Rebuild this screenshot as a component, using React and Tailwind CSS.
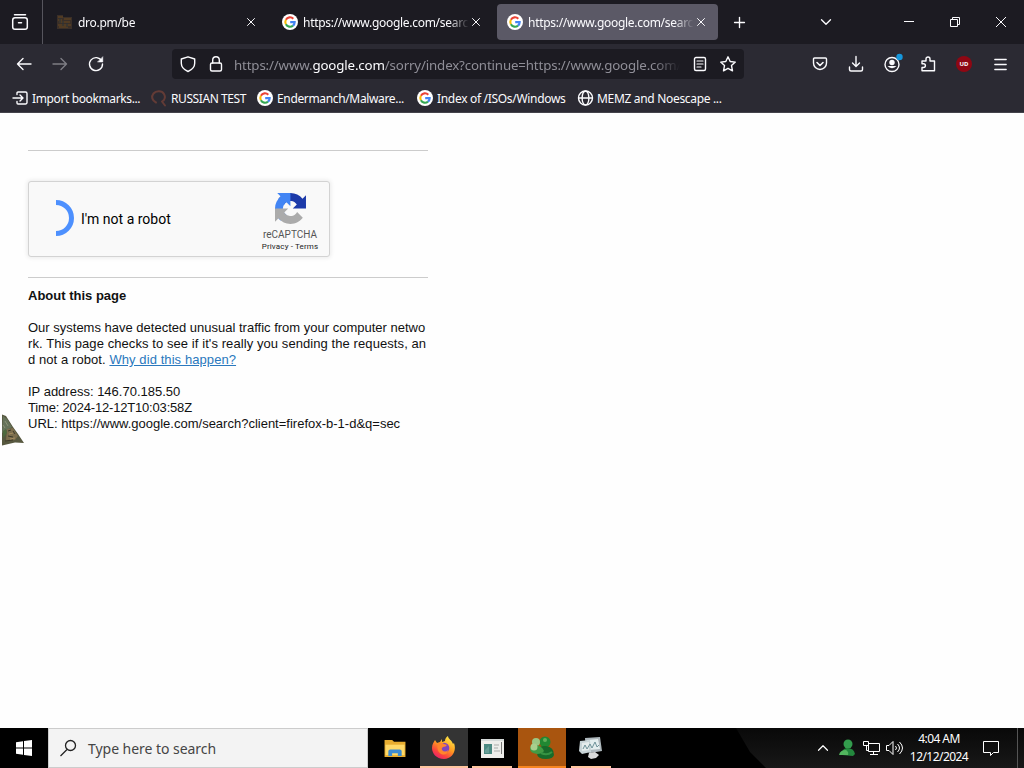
import { ChevronDown, ChevronUp, Menu, Plus, X } from "lucide-react";

const tabs = [
  { title: "dro.pm/be", icon: "be" },
  { title: "https://www.google.com/searc", icon: "google" },
  { title: "https://www.google.com/searc", icon: "google", active: true },
];

function Google() {
  return (
    <svg width="16" height="16" viewBox="0 0 16 16" className="shrink-0">
      <circle cx="8" cy="8" r="8" fill="#fff" />
      <g fill="none" strokeWidth="2.1">
        <path d="M11.3 4.7A4.7 4.7 0 0 0 3.9 5.7" stroke="#ea4335" />
        <path d="M3.9 5.7A4.7 4.7 0 0 0 3.9 10.3" stroke="#fbbc05" />
        <path d="M3.9 10.3A4.7 4.7 0 0 0 11 11.6" stroke="#34a853" />
        <path d="M11 11.6A4.7 4.7 0 0 0 12.7 8.1H8.2" stroke="#4285f4" />
      </g>
    </svg>
  );
}

function BeIcon() {
  return (
    <svg width="16" height="16" viewBox="0 0 16 16" className="shrink-0">
      <path d="M0 1h6v2h9v12H0z" fill="#3a2f28" />
      <path d="M1 3h5M1 6h4M2 8h11M7 5h7M1 11h13M2 13h9" stroke="#69491f" strokeWidth="1" />
      <path d="M3 4v5M6 7v5M10 9v4" stroke="#27323a" strokeWidth="1" />
    </svg>
  );
}

function Tab({ title, icon, active }) {
  return (
    <div
      className={`flex h-9 w-[221px] shrink-0 items-center rounded pl-2.5 pr-3 ${
        active ? "bg-[#5b5966]" : ""
      }`}
    >
      {icon === "google" ? <Google /> : <BeIcon />}
      <span className="ml-[5px] mt-0.5 w-[166px] whitespace-nowrap text-[12px] leading-5 tracking-[-0.29px] [mask-image:linear-gradient(to_right,black_88%,transparent)]">
        {title}
      </span>
      <X size={14} strokeWidth={1.7} className="ml-auto -mr-0.5 shrink-0" />
    </div>
  );
}

function TabBar() {
  return (
    <div className="flex h-11 items-center bg-[#1c1b22]">
      <div className="flex h-11 w-[43px] items-center justify-center border-r border-[#56555d] pr-0.5">
        <svg width="18" height="18" viewBox="0 0 18 18" fill="none" stroke="#fbfbfe" strokeWidth="1.5" strokeLinecap="round">
          <path d="M3.5 1.8h11" />
          <path d="M4 4.800h10q2.300 0 2.300 2.400v6.800q0 2.300-2.300 2.300H4q-2.300 0-2.300-2.300V7.200q0-2.400 2.300-2.400zM7.500 9.800h3" />
        </svg>
      </div>
      <div className="ml-1 flex gap-1">
        {tabs.map((tab, i) => (
          <Tab key={i} {...tab} />
        ))}
      </div>
      <Plus size={17} strokeWidth={1.9} className="ml-[13px]" />
      <ChevronDown size={18} strokeWidth={1.8} className="ml-[69px]" />
      <svg width="12" height="12" viewBox="0 0 12 12" className="ml-[68px]" fill="none" stroke="#fbfbfe">
        <path d="M1 5.5h10" />
      </svg>
      <svg width="12" height="12" viewBox="0 0 12 12" className="ml-[34px]" fill="none" stroke="#fbfbfe">
        <path d="M1.500 3.500h7v7h-7zM3.500 3.500v-2h7v7h-2" />
      </svg>
      <svg width="12" height="12" viewBox="0 0 12 12" className="ml-[34px]" fill="none" stroke="#fbfbfe">
        <path d="M1 1l10 10M11 1L1 11" />
      </svg>
    </div>
  );
}

function Icon({ children, className = "" }) {
  return (
    <svg
      width="16"
      height="16"
      viewBox="0 0 16 16"
      fill="none"
      stroke="#fbfbfe"
      strokeWidth="1.4"
      strokeLinecap="round"
      strokeLinejoin="round"
      className={`shrink-0 overflow-visible ${className}`}
    >
      {children}
    </svg>
  );
}

function NavBar() {
  return (
    <div className="flex h-10 items-center bg-[#2b2a33] pl-4">
      <Icon>
        <path d="M15 8H1.500M7 2.500L1.500 8L7 13.500" />
      </Icon>
      <Icon className="ml-5 opacity-40">
        <path d="M1 8h13.500M9 2.500L14.500 8L9 13.500" />
      </Icon>
      <Icon className="ml-5">
        <path d="M13.700 5A6.500 6.500 0 1 0 14.500 8" />
        <path d="M14.800 1v5H9.800z" fill="#fbfbfe" strokeWidth="0.500" />
      </Icon>
      <div className="ml-[68px] flex h-[30px] w-[572px] items-center rounded bg-[#1c1b22] pl-2">
        <Icon>
          <path d="M8 .8L14.700 3v4.300c0 3.600-3 6.600-6.700 8.200-3.700-1.600-6.700-4.600-6.700-8.200V3z" />
        </Icon>
        <Icon className="ml-3">
          <rect x="2.500" y="7" width="11" height="8" rx="1.500" />
          <path d="M4.700 7V4a3.300 3.300 0 0 1 6.600 0v3" />
        </Icon>
        <div className="ml-2.5 mt-0.5 w-[446px] whitespace-nowrap text-[13.3px] leading-5 tracking-[-0.15px] text-[#8f8e97] [mask-image:linear-gradient(to_right,black_94%,transparent)]">
          https://www.<span className="text-[#fbfbfe]">google.com</span>
          /sorry/index?continue=https://www.google.com/
        </div>
        <Icon className="ml-3">
          <rect x="2.500" y="1.500" width="11" height="13" rx="1.500" />
          <path d="M5 5h6M5 8h6M5 11h4" strokeWidth="1.200" />
        </Icon>
        <Icon className="ml-3">
          <path d="M8 .8l2.200 4.700 5.100.6-3.800 3.500 1 5.200L8 12.300l-4.500 2.500 1-5.200L.7 6.100l5.100-.6z" />
        </Icon>
      </div>
      <Icon className="ml-[68px]">
        <path d="M2.500 2h11a1 1 0 0 1 1 1v4a6.500 6.500 0 0 1-13 0V3a1 1 0 0 1 1-1z" />
        <path d="M5 6.500l3 3 3-3" strokeWidth="1.600" />
      </Icon>
      <Icon className="ml-5">
        <path d="M8 .5v9.500M4.500 7L8 10.500 11.500 7M1.500 11v2.500q0 1.500 1.500 1.500h10q1.500 0 1.500-1.500V11" />
      </Icon>
      <Icon className="ml-5">
        <circle cx="8" cy="8.500" r="7" />
        <circle cx="8" cy="6.500" r="2.700" fill="#fbfbfe" stroke="none" />
        <path d="M3.500 10h9a5.500 5 0 0 1-9 0z" fill="#fbfbfe" stroke="none" />
        <circle cx="15.500" cy="1" r="3.200" fill="#1597dc" stroke="none" />
      </Icon>
      <Icon className="ml-5">
        <path d="M2 5h4V3a2 2 0 0 1 4 0v2h4.500v9.700H2v-3.200h1.500a1.900 1.900 0 0 0 0-3.800H2z" />
      </Icon>
      <div className="ml-5 flex size-4 items-center justify-center rounded-full bg-[#8f0713] text-[6px] font-bold leading-none">
        UD
      </div>
      <Menu size={17} strokeWidth={1.900} className="ml-5" />
    </div>
  );
}

function Bookmark({ children, label, className = "" }) {
  return (
    <div className={`flex shrink-0 items-center whitespace-nowrap ${className}`}>
      {children}
      <span className="ml-1 mt-px text-[12px] leading-5">{label}</span>
    </div>
  );
}

function BookmarksBar() {
  return (
    <div className="flex h-[29px] items-center border-b border-[#44434b] bg-[#2b2a33] pl-3">
      <Bookmark label="Import bookmarks..." className="w-[139px] tracking-[-0.38px]">
        <Icon>
          <path d="M5 4.500V3a1 1 0 0 1 1-1h7.500a1.500 1.500 0 0 1 1.500 1.500v9a1.500 1.500 0 0 1-1.500 1.500H6a1 1 0 0 1-1-1v-1.500M1 8h9.500M8 5l3 3-3 3" />
        </Icon>
      </Bookmark>
      <Bookmark label="RUSSIAN TEST" className="w-[106px] tracking-[-0.42px]">
        <Icon>
          <path d="M5 12.500C1 10.500 0 6.500 2.500 3.500S11 .5 13 4s.5 6-2 7.500l3 4" stroke="#633b36" strokeWidth="2" />
        </Icon>
      </Bookmark>
      <Bookmark label="Endermanch/Malware..." className="w-40 tracking-[-0.35px]">
        <Google />
      </Bookmark>
      <Bookmark label="Index of /ISOs/Windows" className="w-40 tracking-[-0.31px]">
        <Google />
      </Bookmark>
      <Bookmark label="MEMZ and Noescape ..." className="tracking-[-0.32px]">
        <Icon>
          <circle cx="8.500" cy="8" r="7" />
          <ellipse cx="8.500" cy="8" rx="3.400" ry="7" />
          <path d="M2 8h13" />
        </Icon>
      </Bookmark>
    </div>
  );
}

function Captcha() {
  return (
    <div className="mt-[30px] flex h-[76px] w-[302px] rounded-[3px] border border-[#d3d3d3] bg-[#f9f9f9] shadow-[0_0_4px_1px_rgba(0,0,0,0.08)]">
      <svg width="20" height="38" viewBox="0 0 20 38" className="ml-[26px] mt-[17px]" fill="none">
        <path d="M1 3.500a15.500 15.500 0 0 1 0 31" stroke="#4d90fe" strokeWidth="5" />
      </svg>
      <div className="ml-1.5 mt-[27px] w-[150px] font-[Roboto,sans-serif] text-[14px] leading-5 text-black">
        I'm not a robot
      </div>
      <div className="ml-[25px] mt-[11px] flex w-[68px] flex-col items-center font-[Roboto,sans-serif] text-[#555]">
        <svg width="31" height="31" viewBox="0 0 64 64">
          <path d="M64 31.955l-.033-1.370V4.687l-7.160 7.160C50.950 4.674 42.033.093 32.050.093c-10.400 0-19.622 4.960-25.458 12.640l11.736 11.860a15.550 15.550 0 0 1 4.754-5.334c2.050-1.600 4.952-2.906 8.968-2.906.485 0 .860.057 1.135.163 4.976.393 9.288 3.140 11.828 7.124l-8.307 8.307L64 31.953" fill="#1c3aa9" />
          <path d="M31.862.094l-1.370.033H4.594l7.160 7.160C4.580 13.147 0 22.060 0 32.046c0 10.400 4.960 19.622 12.640 25.458L24.500 45.768a15.550 15.550 0 0 1-5.334-4.754c-1.600-2.050-2.906-4.952-2.906-8.968 0-.485.057-.860.163-1.135.393-4.976 3.140-9.288 7.124-11.828l8.307 8.307L31.860.095" fill="#4285f4" />
          <path d="M.001 32.045l.033 1.370v25.898l7.160-7.160c5.860 7.173 14.774 11.754 24.760 11.754 10.400 0 19.622-4.960 25.458-12.640l-11.736-11.860a15.550 15.550 0 0 1-4.754 5.334c-2.050 1.600-4.952 2.906-8.968 2.906-.485 0-.860-.057-1.135-.163-4.976-.393-9.288-3.140-11.828-7.124l8.307-8.307L.001 32.047" fill="#ababab" />
        </svg>
        <span className="mt-[5px] text-[10px] leading-3">reCAPTCHA</span>
        <span className="whitespace-nowrap text-[8px] leading-[11px] tracking-[0.150px] text-[#222]">Privacy - Terms</span>
      </div>
    </div>
  );
}

function Page() {
  return (
    <main className="grow overflow-hidden bg-[#fefefe] pl-7 pt-[37px] font-[Liberation_Sans,sans-serif] text-[13px] leading-4 text-[#111]">
      <hr className="w-[400px] border-[#ccc]" />
      <Captcha />
      <hr className="mt-5 w-[400px] border-[#ccc]" />
      <h1 className="mt-2.5 font-bold">About this page</h1>
      <p className="mt-4 whitespace-nowrap">
        Our systems have detected unusual traffic from your computer netwo
        <br />
        <span className="tracking-[0.080px]">
          rk. This page checks to see if it's really you sending the requests, an
          <br />
          d not a robot.{" "}
          <a href="#" className="text-[#2a78bd] underline">
            Why did this happen?
          </a>
        </span>
      </p>
      <p className="mt-4 whitespace-nowrap">
        IP address: 146.70.185.50
        <br />
        <span className="tracking-[-0.180px]">Time: 2024-12-12T10:03:58Z</span>
        <br />
        URL: https://www.google.com/search?client=firefox-b-1-d&amp;q=sec
      </p>
    </main>
  );
}

function Cursor() {
  return (
    <svg width="24" height="34" viewBox="0 0 24 34" className="absolute left-0 top-[413px]">
      <path d="M2 1.500L6 3l7 11 5 7 6 9-9-.5L2 32.500z" fill="#57583f" />
      <path d="M3 3l4 3 5 8-5 3-5 3z" fill="#66735a" />
      <path d="M7 16l6-1 5 8-3 4-9 1z" fill="#7c6e4d" />
      <path d="M3 18l3-2 1 4-4 5z" fill="#4d6a3e" />
      <path d="M8 18l3-1M13 18l2 3M8 23l5 1M5 28l8-1" stroke="#3c3928" />
      <path d="M5 8l3 5M3 12l2 3" stroke="#8b9277" />
      <path d="M9 21l4-1M10 26l5-1" stroke="#a58d60" />
    </svg>
  );
}

function TaskButton({ children, className = "", line = "" }) {
  return (
    <div className={`relative flex h-10 w-12 shrink-0 items-center justify-center ${className}`}>
      {children}
      <div className={`absolute bottom-0 h-0.5 ${line}`} />
    </div>
  );
}

function Taskbar() {
  return (
    <footer className="flex h-10 shrink-0 items-center bg-black text-white">
      <div className="flex w-12 justify-center">
        <svg width="16" height="16" viewBox="0 0 16 16" fill="#fff">
          <path d="M0 2.300L7 1.300v6.200H0zM8 1.100L16 0v7.500H8zM0 8.500h7v6.200l-7-1zM8 8.500h8V16l-8-1.100z" />
        </svg>
      </div>
      <div className="flex h-10 w-80 items-center border border-[#ccc] bg-[#f3f3f3] pl-2.5 text-[#454545]">
        <svg width="18" height="18" viewBox="0 0 18 18" fill="none" stroke="#222" strokeWidth="1.300">
          <circle cx="11.500" cy="6.500" r="5" />
          <path d="M8 10.500L1.500 17" />
        </svg>
        <span className="ml-[11px] mt-0.5 text-[14px] leading-5 tracking-[-0.040px]">Type here to search</span>
      </div>
      <div className="ml-[3px] flex">
        <TaskButton>
          <svg width="22" height="19" viewBox="0 0 22 20">
            <path d="M0 1h8l2 2h12v16H0z" fill="#e8ad30" />
            <path d="M1 6h20v11H1z" fill="#ffd968" />
            <path d="M4 18v-5q0-2 2-2h10q2 0 2 2v5h-4v-3H8v3z" fill="#3d8bd1" />
          </svg>
        </TaskButton>
        <TaskButton className="ml-px bg-[#343434]" line="inset-x-0 bg-[#ffc59f]">
          <svg width="24" height="24" viewBox="0 0 24 24">
            <defs>
              <linearGradient id="flame" x1="0.800" y1="0" x2="0.200" y2="1">
                <stop offset="0" stopColor="#fff04a" />
                <stop offset="0.450" stopColor="#ff9a20" />
                <stop offset="0.750" stopColor="#fa443e" />
                <stop offset="1" stopColor="#e51a74" />
              </linearGradient>
            </defs>
            <path d="M3 4l2 3 3-1 2-3v3l3-1c0-2 1-4 3-5 0 3 4 4 5 8l1-1c3 8-2 16-10 16C4 23 0 17 0 12c0-4 2-6 3-8z" fill="url(#flame)" />
            <circle cx="12" cy="12" r="5.300" fill="#8045bd" />
            <path d="M6 7q4-1 6 1l3 1q-1 2-4 2-2 1-1 3 3 3 6 0-1 6-7 4-5-3-3-11z" fill="#ff852c" />
          </svg>
        </TaskButton>
        <TaskButton line="inset-x-1 bg-[#ffc59f]">
          <svg width="23" height="19" viewBox="0 0 23 19">
            <path d="M0 0h23v19H0z" fill="#eeeeeb" />
            <path d="M0 0h23v2H0z" fill="#d5dad9" />
            <path d="M3 5h8v10H3z" fill="#4b8a82" />
            <path d="M13 6h5M13 9h4M13 12h6" stroke="#a8aba9" />
            <path d="M20.500 3v12" stroke="#777" />
            <path d="M4 11l4-4v7H4z" fill="#689f98" />
          </svg>
        </TaskButton>
        <TaskButton className="ml-0.5 bg-[#a9550f]" line="inset-x-0 bg-[#f6851f]">
          <svg width="26" height="26" viewBox="0 0 26 26">
            <circle cx="16" cy="7" r="5.500" fill="#218832" />
            <path d="M8 18q0-8 9-7 8 1 8 9-1 4-8 4-9 0-9-6z" fill="#176b2a" />
            <circle cx="7" cy="7" r="4" fill="#9bc783" />
            <path d="M1 14q0-4 6-4 6 1 8 6-2 3-7 3-7-1-7-5z" fill="#429b45" />
            <circle cx="5" cy="12" r="3.500" fill="#a8cf8d" />
            <path d="M12 18q6 3 11-1" stroke="#369343" fill="none" strokeWidth="2" />
            <circle cx="16" cy="5" r="2" fill="#62af5c" />
          </svg>
        </TaskButton>
        <TaskButton className="ml-px" line="inset-x-1 bg-[#ffc59f]">
          <svg width="24" height="24" viewBox="0 0 24 24">
            <path d="M6 2l15-1 2 14-12 2-4-2z" fill="#aeb8bd" />
            <path d="M8 4l11-1 2 10-11 1z" fill="#e4eeef" />
            <path d="M1 5l10-1 1 12-9 2-3-3z" fill="#c8d4d7" />
            <path d="M3 7l7-1v8l-7 1z" fill="#e5ecec" />
            <path d="M4 13l2-4 2 4 3-5 2 4 3-6 2 5 2-2" fill="none" stroke="#6e9299" />
            <path d="M10 17l6-1 4 3-3 3-5 1-3-2z" fill="#d8d9d9" />
          </svg>
        </TaskButton>
      </div>
      <div className="ml-auto flex h-10 w-[288px] items-center bg-linear-to-b from-[#090909] to-[#181818] pl-20 [clip-path:polygon(0_0,100%_0,100%_100%,30px_100%,14px_24px)]">
        <ChevronUp size={18} strokeWidth={1.600} className="-ml-0.5" />
        <svg width="18" height="18" viewBox="0 0 18 18" className="ml-1.5">
          <circle cx="10" cy="5" r="4.500" fill="#339c4d" />
          <path d="M4 16q-1-6 5-7 7 0 8 6l-2 2z" fill="#23883d" />
          <path d="M1 16q1-5 7-5 3 2 2 5z" fill="#52b65e" />
        </svg>
        <svg width="17" height="16" viewBox="0 0 17 16" className="ml-[7px]" fill="none" stroke="#fff">
          <path d="M5.500 3.500h11v8h-11zM10.500 11.500v3M7 14.500h8M.5 1.500h5v4h-5zM3.500 5.500v5h2" />
        </svg>
        <svg width="17" height="16" viewBox="0 0 17 16" className="ml-1.5" fill="none" stroke="#fff">
          <path d="M.5 5.500H3l4-4v13l-4-4H.5zM9.500 6q2 2 0 4M11.500 4q4 4 0 8M13.500 2q6 6 0 12" />
        </svg>
        <div className="ml-1.5 w-[60px] text-center text-[12px] leading-[18px] tracking-[-0.550px]">
          <div>4:04 AM</div>
          <div>12/12/2024</div>
        </div>
        <svg width="18" height="18" viewBox="0 0 18 18" className="ml-[13px]" fill="none" stroke="#fff">
          <path d="M1.500 2.500h15v11h-5l-3 3v-3h-7z" />
        </svg>
        <div className="ml-[17px] h-10 w-px bg-[#555]" />
      </div>
    </footer>
  );
}

export default function App() {
  return (
    <div className="relative flex h-[768px] w-[1024px] flex-col overflow-hidden bg-white font-[Noto_Sans,sans-serif]">
      <header className="shrink-0 text-[#fbfbfe]">
        <TabBar />
        <NavBar />
        <BookmarksBar />
      </header>
      <Page />
      <Taskbar />
      <Cursor />
    </div>
  );
}
